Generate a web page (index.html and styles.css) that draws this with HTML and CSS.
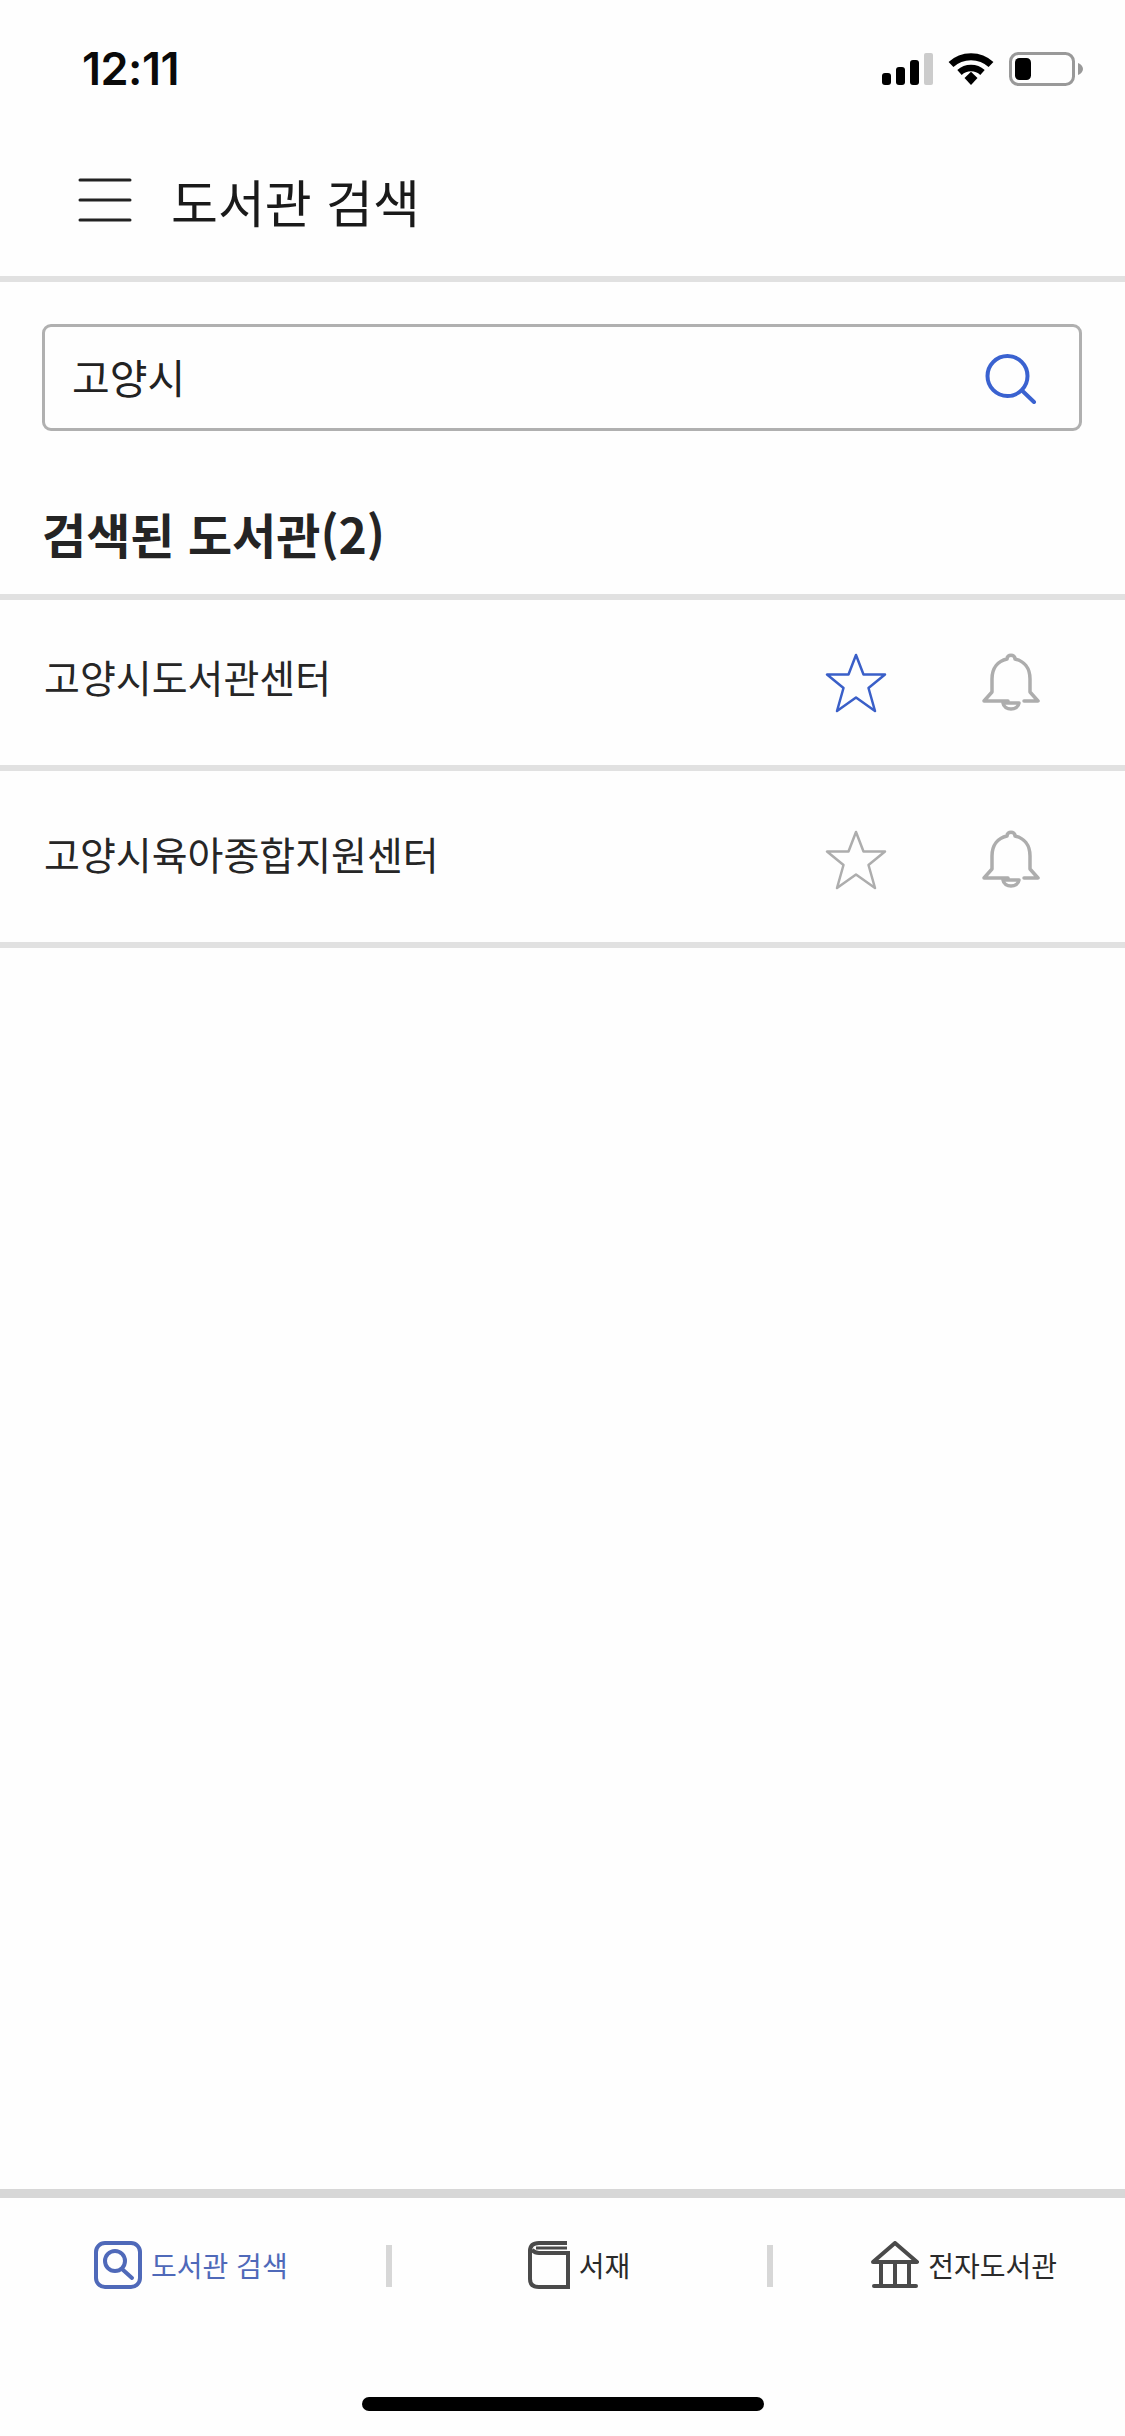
FILE: index.html
```html
<!DOCTYPE html>
<html lang="ko">
<head>
<meta charset="utf-8">
<title>도서관 검색</title>
<link rel="stylesheet" href="styles.css">
</head>
<body>
<div class="page">
  <div class="status">
    <span class="time">12:11</span>
    <div class="status-icons">
      <svg class="signal" width="51" height="32" viewBox="0 0 51 32"><rect x="0" y="20" width="9" height="12" rx="3" fill="#000"/><rect x="14" y="14" width="9" height="18" rx="3" fill="#000"/><rect x="28" y="7" width="9" height="25" rx="3" fill="#000"/><rect x="42" y="0" width="9" height="32" rx="2" fill="#ccc"/></svg>
      <svg class="wifi" width="46" height="33" viewBox="0 0 46 33"><path d="M3 12.5C14 2 32 2 43 12.5" fill="none" stroke="#000" stroke-width="7"/><path d="M11.5 20.500C18 14.500 28 14.500 34.500 20.500" fill="none" stroke="#000" stroke-width="6.500"/><path d="M16.500 26L23 19.800L29.500 26L23 33Z" fill="#000" transform="translate(0 0)"/></svg>
      <svg class="battery" width="74" height="34" viewBox="0 0 74 34"><rect x="1.500" y="1.500" width="63" height="31" rx="8" fill="none" stroke="#999" stroke-width="3"/><rect x="6" y="6" width="16" height="22" rx="4.500" fill="#000"/><path d="M69 11C72 12 74 14.500 74 17C74 19.500 72 22 69 23Z" fill="#999"/></svg>
    </div>
  </div>

  <header class="topbar">
    <svg class="menu" width="54" height="44" viewBox="0 0 54 44"><g stroke="#222" stroke-width="3" stroke-linecap="round"><path d="M2 2H52M2 22H52M2 42H52"/></g></svg>
    <h1 class="title">도서관 검색</h1>
  </header>
  <div class="rule"></div>

  <div class="search-wrap">
    <div class="search">
      <span class="query">고양시</span>
      <svg class="search-icon" width="52" height="50" viewBox="0 0 52 50"><circle cx="22.500" cy="22" r="20" fill="none" stroke="#3a62d0" stroke-width="4"/><path d="M37 36.500L49 48" stroke="#3a62d0" stroke-width="4" stroke-linecap="round"/></svg>
    </div>
  </div>

  <h2 class="heading">검색된 도서관(2)</h2>
  <div class="rule"></div>

  <div class="row row-first">
    <span class="name">고양시도서관센터</span>
    <svg class="star" width="62" height="60" viewBox="0 0 62 60"><path class="star-path star-on" d="M31 2L38.500 21.500H60L43.500 35L50 58L31 44.500L12 58L18.500 35L2 21.500H23.500Z"/></svg>
    <svg class="bell" width="58" height="60" viewBox="0 0 58 60"><path class="bell-path" d="M25 6C25 1 33 1 33 6C42 8 48 15 48 26V39L56 48H42M26 48H2L10 39V26C10 15 16 8 25 6M21 50C22 58 36 58 37 50Z"/></svg>
  </div>
  <div class="rule"></div>
  <div class="row row-second">
    <span class="name">고양시육아종합지원센터</span>
    <svg class="star" width="62" height="60" viewBox="0 0 62 60"><path class="star-path star-off" d="M31 2L38.500 21.500H60L43.500 35L50 58L31 44.500L12 58L18.500 35L2 21.500H23.500Z"/></svg>
    <svg class="bell" width="58" height="60" viewBox="0 0 58 60"><path class="bell-path" d="M25 6C25 1 33 1 33 6C42 8 48 15 48 26V39L56 48H42M26 48H2L10 39V26C10 15 16 8 25 6M21 50C22 58 36 58 37 50Z"/></svg>
  </div>
  <div class="rule"></div>

  <div class="spacer"></div>

  <nav class="tabs">
    <div class="tab tab-search">
      <svg width="48" height="48" viewBox="0 0 48 48"><rect x="2" y="2" width="44" height="44" rx="9" fill="none" stroke="#4f69b9" stroke-width="4"/><circle cx="21" cy="20" r="10" fill="none" stroke="#4f69b9" stroke-width="4"/><path d="M28 28L38 37" stroke="#4f69b9" stroke-width="4" stroke-linecap="round"/></svg>
      <span class="tab-label label-active">도서관 검색</span>
    </div>
    <div class="sep"></div>
    <div class="tab tab-shelf">
      <svg width="42" height="48" viewBox="0 0 42 48"><path d="M39 2H11C5 2 2 5 2 10V38C2 43 5 46 11 46H40V12H11C8 12 6 11 4 9" fill="none" stroke="#4a4a4a" stroke-width="4"/><path d="M39 7H8" stroke="#4a4a4a" stroke-width="3"/></svg>
      <span class="tab-label">서재</span>
    </div>
    <div class="sep sep-two"></div>
    <div class="tab tab-ebook">
      <svg width="48" height="48" viewBox="0 0 48 48"><path d="M2 21L24 2L46 21H2Z" fill="none" stroke="#4a4a4a" stroke-width="4" stroke-linejoin="round"/><path d="M10 21V45M24 21V45M38 21V45" stroke="#4a4a4a" stroke-width="4"/><path d="M3 45H45" stroke="#4a4a4a" stroke-width="4" stroke-linecap="round"/></svg>
      <span class="tab-label">전자도서관</span>
    </div>
  </nav>
  <div class="home-wrap"><div class="home"></div></div>
</div>
</body>
</html>
```

FILE: styles.css
```css
* { box-sizing: border-box; margin: 0; padding: 0; }
html, body { width: 1125px; height: 2436px; background: #fefefe; }
body { font-family: "Inter", "Noto Sans CJK KR", sans-serif; color: #222; overflow: hidden; }
.page { width: 1125px; height: 2436px; display: flex; flex-direction: column; }

.status { height: 90px; display: flex; justify-content: space-between; align-items: flex-start; padding: 46px 42px 0 82px; flex: none; }
.time { font-size: 45px; font-weight: 600; line-height: 46px; color: #0a0a0a; letter-spacing: -0.5px; }
.status-icons { display: flex; align-items: flex-start; padding-top: 6px; }
.signal { margin-top: 1px; }
.wifi { margin-left: 15px; }
.battery { margin-left: 15px; }

.topbar { height: 186px; display: flex; align-items: flex-start; padding: 88px 0 0 78px; flex: none; }
.menu { flex: none; }
.title { font-family: "Noto Sans CJK KR", sans-serif; font-size: 51px; font-weight: 400; line-height: 70px; color: #1a1a1a; margin: -12px 0 0 39px; }
.rule { height: 6px; background: #e1e1e1; flex: none; }

.search-wrap { padding: 42px 43px 0 42px; flex: none; }
.search { height: 107px; border: 3px solid #b0b0b0; border-radius: 9px; display: flex; align-items: center; justify-content: space-between; padding: 0 42px 0 27px; }
.query { font-family: "Noto Sans CJK KR", sans-serif; font-size: 41px; line-height: 60px; color: #222; margin-top: -3px; }
.search-icon { flex: none; margin-top: 2px; }

.heading { font-family: "Noto Sans CJK KR", sans-serif; font-size: 48px; font-weight: 700; line-height: 70px; color: #242424; padding: 67px 0 0 42px; height: 163px; flex: none; }

.row { display: flex; align-items: flex-start; padding: 48px 0 0 44px; flex: none; }
.row-first { height: 165px; }
.row-second { height: 171px; padding-top: 54px; }
.name { font-family: "Noto Sans CJK KR", sans-serif; font-size: 39px; line-height: 56px; color: #262626; flex: 1; }
.star { flex: none; margin: 5px 0 0 0; }
.bell { flex: none; margin: 5px 85px 0 95px; }
.star-path { fill: none; stroke-width: 2.500; stroke-linejoin: round; }
.star-on { stroke: #3a5fc8; }
.star-off { stroke: #adadad; }
.bell-path { fill: none; stroke: #adadad; stroke-width: 3.500; stroke-linejoin: round; stroke-linecap: round; }

.spacer { flex: 1; }

.tabs { height: 208px; border-top: 9px solid #d7d7d7; display: flex; align-items: flex-start; padding: 43px 0 0 94px; flex: none; }
.tab { display: flex; align-items: center; flex: none; }
.tab-label { font-family: "Noto Sans CJK KR", sans-serif; font-size: 28px; line-height: 48px; color: #2a2a2a; margin-left: 9px; }
.label-active { color: #4f69b9; }
.sep { width: 6px; height: 42px; background: #d7d7d7; margin: 4px 0 0 98px; flex: none; }
.sep-two { margin-left: 137px; }
.tab-shelf { margin-left: 136px; }
.tab-ebook { margin-left: 98px; }

.home-wrap { height: 39px; flex: none; }
.home { width: 402px; height: 14px; background: #000; border-radius: 7px; margin-left: 362px; }
```
